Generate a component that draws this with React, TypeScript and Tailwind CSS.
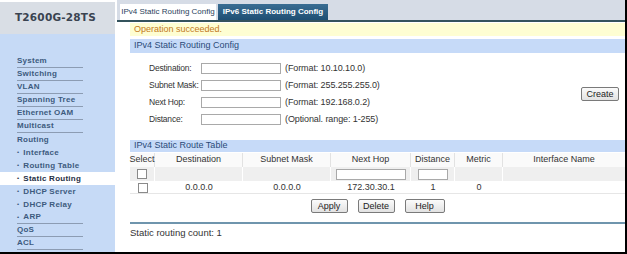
import React from "react";

const menu: { label: string; sub?: boolean; line?: boolean; active?: boolean }[] = [
  { label: "System", line: true },
  { label: "Switching", line: true },
  { label: "VLAN", line: true },
  { label: "Spanning Tree", line: true },
  { label: "Ethernet OAM", line: true },
  { label: "Multicast", line: true },
  { label: "Routing" },
  { label: "Interface", sub: true },
  { label: "Routing Table", sub: true },
  { label: "Static Routing", sub: true, active: true },
  { label: "DHCP Server", sub: true },
  { label: "DHCP Relay", sub: true },
  { label: "ARP", sub: true, line: true },
  { label: "QoS", line: true },
  { label: "ACL", line: true },
];

const formRows = [
  { label: "Destination:", hint: "(Format: 10.10.10.0)" },
  { label: "Subnet Mask:", hint: "(Format: 255.255.255.0)" },
  { label: "Next Hop:", hint: "(Format: 192.168.0.2)" },
  { label: "Distance:", hint: "(Optional. range: 1-255)" },
];

const cols = "grid grid-cols-[25px_88px_88px_80px_44px_48px_1fr]";

function Btn({ children, className = "" }: { children: React.ReactNode; className?: string }) {
  return (
    <button
      className={`h-[14px] rounded-[2px] border border-[#7a7a7a] bg-gradient-to-b from-[#fbfbfb] to-[#e2e2e2] text-[9px] leading-none text-[#222] ${className}`}
    >
      {children}
    </button>
  );
}

function Box() {
  return <span className="block h-[10px] w-[10px] border border-[#8a8a8a] bg-white" />;
}

function Field({ className = "" }: { className?: string }) {
  return <span className={`block h-[11px] border border-[#a9a9a9] bg-white ${className}`} />;
}

export default function App() {
  return (
    <div className="relative flex h-[254px] w-[627px] overflow-hidden border-b-2 border-r-2 border-black bg-white font-['Liberation_Sans',Arial,sans-serif] text-[9px] text-[#333]">
      {/* Sidebar */}
      <aside className="flex w-[115px] shrink-0 flex-col pt-[2px]">
        <div className="flex h-[32px] items-center bg-[#d9dee5] pl-[15px] font-['DejaVu_Sans',Verdana,sans-serif] text-[10.5px] font-bold tracking-[0.2px] text-[#3a4350]">
          T2600G-28TS
        </div>
        <nav className="flex-1 bg-[#c6daf6] pt-[21px] text-[8px] font-bold tracking-[0.25px] text-[#3d5a7e]">
          {menu.map((m) => (
            <div key={m.label} className={`h-[13px] ${m.active ? "bg-white text-[#1f2f45]" : ""}`}>
              <div
                className={`ml-[17px] flex h-[13px] w-[66px] items-center whitespace-nowrap ${
                  m.line ? "border-b border-[#8c9cb3]" : ""
                }`}
              >
                {m.sub && <span className="mr-[4px] text-[6px]">•</span>}
                {m.label}
              </div>
            </div>
          ))}
        </nav>
      </aside>

      {/* Main */}
      <main className="flex min-w-0 flex-1 flex-col pl-[2px]">
        <div className="flex h-[22px] shrink-0 items-end gap-[2px] border-b-2 border-[#34535c] bg-[#d6dce6] pl-[3px]">
          <div className="flex h-[16px] w-[96px] items-center justify-center whitespace-nowrap bg-white text-[8px] text-[#2b3f5c]">
            IPv4 Static Routing Config
          </div>
          <div className="flex h-[16px] w-[110px] items-center justify-center whitespace-nowrap bg-gradient-to-b from-[#3a6d93] to-[#1f4f73] text-[8px] font-bold text-white">
            IPv6 Static Routing Config
          </div>
        </div>

        <div className="flex flex-1 flex-col pl-[13px]">
          <div className="mt-[1px] flex h-[13px] items-center bg-[#fefed2] pl-[4px] text-[#c27a22]">
            Operation succeeded.
          </div>
          <div className="mt-[3px] flex h-[14px] items-center bg-[#c6daf8] pl-[4px] text-[#2b4a78]">
            IPv4 Static Routing Config
          </div>

          <div className="relative mt-[10px] flex flex-col gap-[6px] pl-[19px]">
            {formRows.map((r) => (
              <div key={r.label} className="flex h-[11px] items-center whitespace-nowrap">
                <span className="w-[52px] shrink-0 text-[8.5px] tracking-[-0.2px]">{r.label}</span>
                <Field className="w-[80px] shrink-0" />
                <span className="ml-[4px] tracking-[-0.1px]">{r.hint}</span>
              </div>
            ))}
            <Btn className="absolute right-[6px] top-[24px] w-[38px]">Create</Btn>
          </div>

          <div className="mt-[15px] flex h-[12px] items-center bg-[#c6daf8] pl-[4px] text-[#2b4a78]">
            IPv4 Static Route Table
          </div>
          <div className={`${cols} mt-[1px] h-[14px] items-center bg-[#fafafa] text-center`}>
            {["Select", "Destination", "Subnet Mask", "Next Hop", "Distance", "Metric", "Interface Name"].map((h) => (
              <span key={h} className="flex h-full items-center justify-center border-r border-[#e2e2e2] last:border-r-0">
                {h}
              </span>
            ))}
          </div>
          <div className={`${cols} h-[14px] items-center bg-[#efefef]`}>
            <span className="flex h-full items-center justify-center border-r border-white"><Box /></span>
            <span className="h-full border-r border-white" />
            <span className="h-full border-r border-white" />
            <span className="flex h-full items-center justify-center border-r border-white"><Field className="w-[70px]" /></span>
            <span className="flex h-full items-center justify-center border-r border-white"><Field className="w-[30px]" /></span>
            <span className="h-full border-r border-white" />
            <span />
          </div>
          <div className={`${cols} h-[13px] items-center border-b border-[#e6e6e6] text-center`}>
            <span className="flex justify-center"><Box /></span>
            <span>0.0.0.0</span>
            <span>0.0.0.0</span>
            <span>172.30.30.1</span>
            <span>1</span>
            <span>0</span>
            <span />
          </div>
          <div className="mt-[5px] flex justify-center gap-[10px]">
            <Btn className="w-[37px]">Apply</Btn>
            <Btn className="w-[37px]">Delete</Btn>
            <Btn className="w-[40px]">Help</Btn>
          </div>
          <div className="mt-[9px] h-[2px] bg-[#6f95ad]" />
          <div className="mt-[2px] text-[9.5px]">Static routing count: 1</div>
        </div>
      </main>
    </div>
  );
}
